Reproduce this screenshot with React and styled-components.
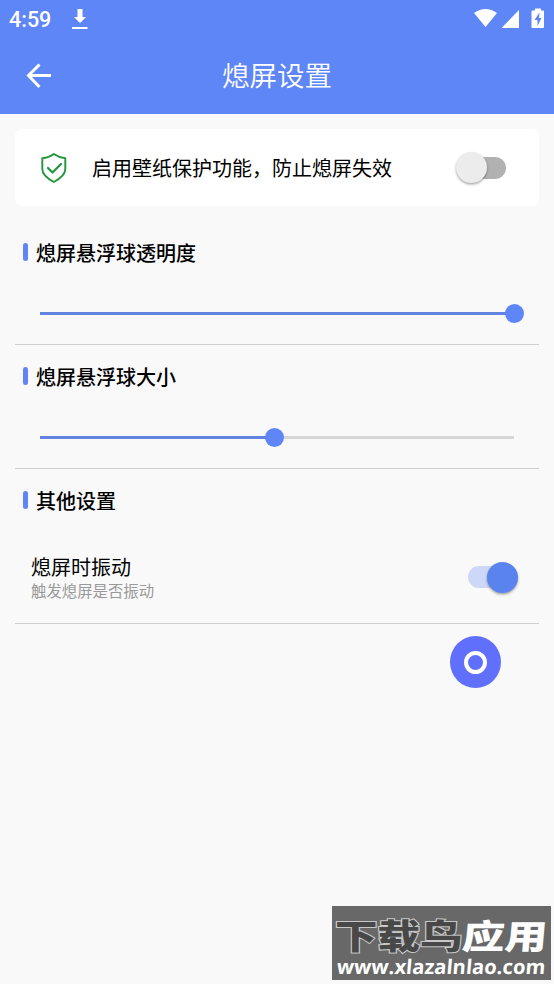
import React from "react";
import styled, { createGlobalStyle } from "styled-components";

const Global = createGlobalStyle`
  * { box-sizing: border-box; }
  body {
    margin: 0;
    background: #f9f9f9;
    color: #000;
    font-family: Roboto, "Noto Sans CJK SC", sans-serif;
  }
`;

const Screen = styled.div`
  position: relative;
  width: 554px;
  height: 984px;
  overflow: hidden;
  background: #f9f9f9;
`;

const Header = styled.header`
  height: 114px;
  background: #5f86f7;
  color: #fff;
`;

const StatusBar = styled.div`
  height: 38px;
  padding: 0 10px 0 9px;
  display: flex;
  align-items: center;
`;

const Clock = styled.span`
  width: 63px;
  padding-top: 1px;
  font-size: 21.5px;
  font-weight: 500;
  line-height: 38px;
`;

const StatusIcons = styled.div`
  margin-left: auto;
  display: flex;
  align-items: center;
`;

const Glyph = styled.svg`
  display: block;
  flex: none;
`;

const TitleBar = styled.div`
  height: 76px;
  padding: 0 26px;
  display: grid;
  grid-template-columns: 26px 1fr 26px;
  align-items: center;
`;

const Title = styled.h1`
  margin: 0;
  padding-top: 2px;
  text-align: center;
  font-size: 27.5px;
  line-height: 40px;
  font-weight: 350;
`;

const Content = styled.main`
  padding: 15px 15px 0;
`;

const Card = styled.section`
  height: 77px;
  padding: 0 33px 0 26px;
  border-radius: 7px;
  background: #fff;
  display: flex;
  align-items: center;
`;

const CardText = styled.span`
  margin-left: 25px;
  padding-top: 3px;
  font-size: 20px;
  line-height: 30px;
`;

const Section = styled.section`
  height: ${(p) => p.$height}px;
  padding-top: ${(p) => p.$top}px;
  border-bottom: 1px solid #cfcfcf;
`;

const SectionTitle = styled.h2`
  margin: 0;
  padding-left: 8px;
  height: 30px;
  display: flex;
  align-items: center;
  gap: 8px;
  font-size: 20px;
  font-weight: 500;
  line-height: 32px;

  &::before {
    content: "";
    width: 5px;
    height: 18px;
    border-radius: 2.5px;
    background: #5f86f7;
  }
`;

const TitleText = styled.span`
  padding-top: 3px;
`;

const Slider = styled.div`
  margin: 37px 25px 0;
  height: 19px;
  display: flex;
  align-items: center;
`;

const Fill = styled.div`
  width: ${(p) => p.$length}px;
  height: 3px;
  background: #6284e0;
`;

const Knob = styled.div`
  width: 19px;
  height: 19px;
  flex: none;
  margin: 0 -9.5px;
  border-radius: 50%;
  background: #5f86f7;
  z-index: 1;
`;

const Rest = styled.div`
  flex: 1;
  height: 3px;
  background: #d6d6d6;
`;

const SettingRow = styled.div`
  margin-top: 36px;
  padding: 0 21px 0 16px;
  display: flex;
  justify-content: space-between;
  align-items: center;
  height: 52px;
`;

const SettingText = styled.div`
  padding-top: 4px;
`;

const Label = styled.div`
  font-size: 20px;
  line-height: 26px;
`;

const Hint = styled.div`
  font-size: 15.4px;
  line-height: 22px;
  color: #999;
`;

const Switch = styled.div`
  width: 50px;
  height: 32px;
  margin-left: auto;
  display: flex;
  align-items: center;
  flex-direction: ${(p) => (p.$on ? "row" : "row-reverse")};
`;

const Track = styled.div`
  flex: 1;
  height: 22px;
  margin: ${(p) => (p.$on ? "0 -16px 0 0" : "0 0 0 -16px")};
  border-radius: 11px;
  background: ${(p) => (p.$on ? "#cdd8f8" : "#b1b1b1")};
`;

const Thumb = styled.div`
  width: 31px;
  height: 31px;
  flex: none;
  border-radius: 50%;
  background: ${(p) => (p.$on ? "#5b83ef" : "#ececec")};
  box-shadow: 0 1.5px 2.5px rgba(0, 0, 0, 0.35);
  z-index: 1;
`;

const FloatingBall = styled.div`
  position: absolute;
  left: 450px;
  top: 636px;
  width: 51px;
  height: 52px;
  border-radius: 50%;
  background: #6070fc;
  display: grid;
  place-items: center;
`;

const Ring = styled.div`
  width: 23px;
  height: 23px;
  border: 4.5px solid #fff;
  border-radius: 50%;
`;

const Watermark = styled.div`
  position: absolute;
  left: 332px;
  top: 906px;
  width: 219px;
  height: 74px;
  padding: 10px 0 0 3px;
  background: #686868;
  overflow: hidden;
  white-space: nowrap;
`;

const Brand = styled.div`
  height: 38px;
  font: 900 34px/38px "Noto Sans CJK SC", sans-serif;
  transform: scaleX(1.25);
  transform-origin: left;
`;

const BrandPart = styled.span`
  display: inline-block;
  color: ${(p) => (p.$light ? "#fff" : "#484848")};
  -webkit-text-stroke: ${(p) => (p.$light ? "0" : "2px #c8c8c8")};
  paint-order: stroke fill;
  transform: ${(p) => (p.$light ? "skewX(-4deg)" : "none")};
`;

const Address = styled.div`
  height: 22px;
  margin-top: 1px;
  padding-left: 2px;
  color: #fff;
  font: 700 20.2px/22px "Open Sans", "Noto Sans", sans-serif;
  transform: skewX(-5deg);
`;

export default function App() {
  return (
    <Screen>
      <Global />
      <Header>
        <StatusBar>
          <Clock>4:59</Clock>
          <Glyph width="16" height="22" viewBox="0 0 16 22" fill="#fff">
            <path d="M5.500 1h5v8H14l-6 6-6-6h3.500zM0 19h15.500v2H0z" />
          </Glyph>
          <StatusIcons>
            <Glyph width="70" height="22" viewBox="0 0 70 22" fill="#fff">
              <path d="M0 5Q11.500-3 23 5L11.500 19zM28 20V19.500L45 2V20z" />
              <path
                fillRule="evenodd"
                d="M58 2.500h3V.5h6v2h2q1 0 1 1v15.500q0 1-1 1H58.500q-1 0-1-1V3.500q0-1 1-1zM65.500 4.500l-5 7.500h3V18l4-8h-2.500z"
              />
            </Glyph>
          </StatusIcons>
        </StatusBar>
        <TitleBar>
          <Glyph width="26" height="26" viewBox="0 0 26 26" fill="none" stroke="#fff" strokeWidth="3">
            <path d="M25 12.500H2M13.500 1.500 2.500 12.500 13.500 24" />
          </Glyph>
          <Title>熄屏设置</Title>
        </TitleBar>
      </Header>
      <Content>
        <Card>
          <Glyph width="26" height="30" viewBox="0 0 26 30" fill="none" stroke="#22963c" strokeWidth="1.900" strokeLinejoin="round" strokeLinecap="round">
            <path d="M12.800 1C9.500 3.500 6 4.900 1.300 5.200V16c0 6 5 9.500 11.500 13 6.500-3.500 11.500-7 11.500-13V5.200C20 4.900 16.500 3.500 12.800 1z" />
            <path d="m7 15 4.500 4.500 8.500-8.500" strokeWidth="2.200" />
          </Glyph>
          <CardText>启用壁纸保护功能，防止熄屏失效</CardText>
          <Switch>
            <Track />
            <Thumb />
          </Switch>
        </Card>
        <Section $height={139} $top={31}>
          <SectionTitle><TitleText>熄屏悬浮球透明度</TitleText></SectionTitle>
          <Slider>
            <Fill $length={474} />
            <Knob />
          </Slider>
        </Section>
        <Section $height={124} $top={16}>
          <SectionTitle><TitleText>熄屏悬浮球大小</TitleText></SectionTitle>
          <Slider>
            <Fill $length={234} />
            <Knob />
            <Rest />
          </Slider>
        </Section>
        <Section $height={155} $top={16}>
          <SectionTitle><TitleText>其他设置</TitleText></SectionTitle>
          <SettingRow>
            <SettingText>
              <Label>熄屏时振动</Label>
              <Hint>触发熄屏是否振动</Hint>
            </SettingText>
            <Switch $on>
              <Track $on />
              <Thumb $on />
            </Switch>
          </SettingRow>
        </Section>
      </Content>
      <FloatingBall>
        <Ring />
      </FloatingBall>
      <Watermark>
        <Brand>
          <BrandPart>下载鸟</BrandPart>
          <BrandPart $light>应用</BrandPart>
        </Brand>
        <Address>www.xlazalnlao.com</Address>
      </Watermark>
    </Screen>
  );
}
